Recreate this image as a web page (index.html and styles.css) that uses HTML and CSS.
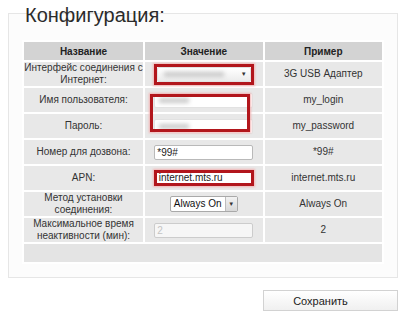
FILE: index.html
```html
<!DOCTYPE html>
<html lang="ru">
<head>
  <meta charset="UTF-8" />
  <title>Конфигурация</title>
  <link rel="stylesheet" href="styles.css">
</head>
<body>
  <div class="panel">
    <h1 class="title">Конфигурация:</h1>
    <table class="config">
      <colgroup>
        <col class="c1"><col class="c2"><col class="c3">
      </colgroup>
      <thead>
        <tr><th>Название</th><th>Значение</th><th>Пример</th></tr>
      </thead>
      <tbody>
        <tr>
          <td>Интерфейс соединения с<br>Интернет:</td>
          <td>
            <div class="hl">
              <div class="select wide"><span class="blur"></span><span class="arrow">&#9660;</span></div>
            </div>
          </td>
          <td>3G USB Адаптер</td>
        </tr>
        <tr>
          <td>Имя пользователя:</td>
          <td><div class="field"><span class="blur short"></span></div></td>
          <td>my_login</td>
        </tr>
        <tr>
          <td>Пароль:</td>
          <td><div class="field"><span class="blur short"></span></div></td>
          <td>my_password</td>
        </tr>
        <tr>
          <td>Номер для дозвона:</td>
          <td><div class="field boxed">*99#</div></td>
          <td>*99#</td>
        </tr>
        <tr>
          <td>APN:</td>
          <td><div class="hl thin"><div class="field">internet.mts.ru</div></div></td>
          <td>internet.mts.ru</td>
        </tr>
        <tr>
          <td>Метод установки<br>соединения:</td>
          <td><div class="select small"><span class="val">Always On</span><span class="btn">&#9660;</span></div></td>
          <td>Always On</td>
        </tr>
        <tr>
          <td>Максимальное время<br>неактивности (мин):</td>
          <td><div class="field boxed disabled">2</div></td>
          <td>2</td>
        </tr>
        <tr class="foot"><td colspan="3"></td></tr>
      </tbody>
    </table>
    <div class="mark login-mark"></div>
  </div>
  <div class="actions">
    <button class="save">Сохранить</button>
  </div>
</body>
</html>
```

FILE: styles.css
```css
body {
  margin: 0;
  background: #ffffff;
  font-family: 'Liberation Sans', Arial, sans-serif;
  color: #333333;
}
.panel {
  position: relative;
  margin: 13px 11px 0 8px;
  border: 1px solid #e6e6e6;
  background: #fcfcfc;
  padding: 0 13px 13px 13px;
}
.title {
  margin: -10px 0 14px 3px;
  font-size: 20px;
  line-height: 22px;
  font-weight: normal;
  color: #2b2b2b;
}
.config {
  width: 100%;
  table-layout: fixed;
  border-spacing: 2px;
  background: #ffffff;
  font-size: 10px;
}
.c1 { width: 119px; }
.config th {
  height: 18px;
  padding: 0;
  background: #d3d3d3;
  font-size: 10px;
  font-weight: bold;
  color: #222222;
}
.config td {
  height: 24px;
  padding: 0;
  background: #e8e8e8;
  text-align: center;
  line-height: 12px;
  color: #333333;
}
.config .foot td {
  height: 18px;
  background: #e4e4e4;
}
.hl {
  width: 94px;
  margin: 0 auto;
  border: 3px solid #b2161c;
  box-shadow: 0 0 2px 1px #f2b3b3;
  background: #ffffff;
}
.hl.thin .field {
  width: auto;
  height: 10px;
  border: none;
  line-height: 10px;
}
.field {
  width: 95px;
  height: 13px;
  margin: 0 auto;
  border: 1px solid #e2e2e2;
  border-radius: 2px;
  background: #ffffff;
  text-align: left;
  padding-left: 2px;
  font-size: 10px;
  line-height: 13px;
  color: #222222;
}
.field.boxed {
  border-color: #b9b9b9;
}
.field.disabled {
  border-color: #cccccc;
  background: #f6f6f6;
  color: #c4c4c4;
}
.blur {
  display: inline-block;
  width: 60px;
  height: 5px;
  margin: 4px 0 0 6px;
  vertical-align: top;
  background: #c9c9c9;
  filter: blur(2px);
}
.blur.short {
  width: 30px;
  margin-left: 2px;
}
.select {
  display: flex;
  align-items: center;
  justify-content: space-between;
  margin: 0 auto;
  background: linear-gradient(#ffffff, #ececec);
  border: 1px solid #cfcfcf;
  border-radius: 2px;
  font-size: 10px;
}
.select.wide {
  height: 13px;
  border-color: #e2e2e2;
}
.select.wide .blur {
  margin-top: 0;
}
.arrow {
  margin-right: 3px;
  font-size: 6px;
  color: #333333;
}
.select.small {
  width: 66px;
  height: 14px;
  border-color: #a9a9a9;
  background: #ffffff;
}
.select.small .val {
  padding-left: 3px;
  color: #111111;
}
.select.small .btn {
  width: 11px;
  height: 14px;
  border-left: 1px solid #bdbdbd;
  background: linear-gradient(#f2f2f2, #d8d8d8);
  font-size: 6px;
  line-height: 14px;
  text-align: center;
}
.mark {
  position: absolute;
  border: 3px solid #b2161c;
  box-shadow: 0 0 2px 1px #f2b3b3;
}
.login-mark {
  left: 141px;
  top: 80px;
  width: 94px;
  height: 32px;
}
.actions {
  display: flex;
  justify-content: flex-end;
  margin: 12px 11px 0 0;
}
.save {
  width: 135px;
  height: 21px;
  padding: 0 20px 0 0;
  border: 1px solid #d2d2d2;
  background: linear-gradient(#ffffff, #f0f0f0);
  font-family: 'Liberation Sans', Arial, sans-serif;
  font-size: 11px;
  color: #222222;
}
```
